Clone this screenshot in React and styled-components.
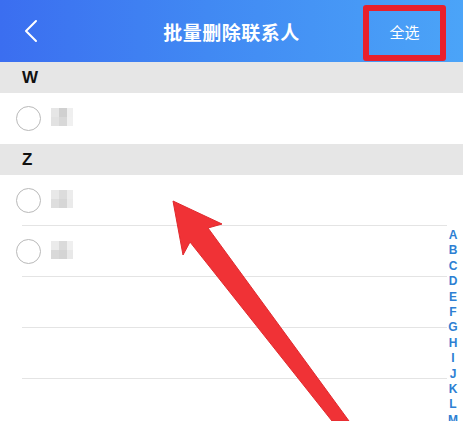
import React from "react";
import styled, { createGlobalStyle } from "styled-components";

const Global = createGlobalStyle`
  html, body { margin: 0; padding: 0; background: #fff; }
  body { font-family: "Noto Sans", "Noto Sans CJK SC", sans-serif; overflow: hidden; }
`;

const Page = styled.div`
  position: relative;
  width: 463px;
  height: 421px;
  overflow: hidden;
  background: #fff;
`;

const Header = styled.header`
  height: 62px;
  display: grid;
  grid-template-columns: 70px 1fr 100px;
  align-items: center;
  background: linear-gradient(90deg, #3b6ef0 0%, #4189f3 45%, #4ba4f8 100%);
  box-sizing: border-box;
`;

const Back = styled.div`
  display: flex;
  align-items: center;
  padding-left: 24px;
`;

const Title = styled.h1`
  margin: 0;
  text-align: center;
  color: #fff;
  font-family: "Noto Sans CJK SC", sans-serif;
  font-size: 19px;
  font-weight: 700;
  letter-spacing: 0.5px;
  padding-left: 30px;
`;

const SelectAll = styled.div`
  justify-self: start;
  margin-top: 4px;
  width: 83px;
  height: 56px;
  box-sizing: border-box;
  border: 6px solid #e8202c;
  border-radius: 3px;
  display: flex;
  align-items: center;
  justify-content: center;
  color: #fff;
  font-family: "Noto Sans CJK SC", sans-serif;
  font-size: 15px;
  padding-bottom: 4px;
`;

const SectionHeader = styled.div`
  height: 31px;
  background: #e6e6e6;
  display: flex;
  align-items: center;
  padding-left: 22px;
  font-family: "Liberation Sans", sans-serif;
  font-weight: 700;
  font-size: 17px;
  color: #111;
`;

const Row = styled.div`
  height: 51px;
  display: flex;
  align-items: center;
  padding-left: 16px;
  gap: 10px;
  position: relative;
  &::after {
    content: "";
    display: ${(p) => (p.$sep ? "block" : "none")};
    position: absolute;
    left: 22px;
    right: 16px;
    bottom: 0;
    height: 1px;
    background: #e4e4e4;
  }
`;

const Radio = styled.span`
  width: 23px;
  height: 23px;
  border-radius: 50%;
  border: 1px solid #b9b9b9;
  flex: none;
`;

const Blur = styled.span`
  display: grid;
  grid-template-columns: 8px 8px 6px;
  grid-template-rows: 9px 9px;
  margin-top: -4px;
  & > i { display: block; }
`;

const Name = ({ shades }) => (
  <Blur>
    {shades.map((c, i) => (
      <i key={i} style={{ background: c }} />
    ))}
  </Blur>
);

const Index = styled.div`
  position: absolute;
  right: 3px;
  top: 228px;
  display: flex;
  flex-direction: column;
  align-items: center;
  width: 14px;
  font-family: "Liberation Sans", sans-serif;
  font-size: 12px;
  font-weight: 700;
  color: #2e7fd3;
  line-height: 15.4px;
`;

const Arrow = styled.svg`
  position: absolute;
  left: 0;
  top: 0;
  pointer-events: none;
`;

const letters = "ABCDEFGHIJKLM".split("");

export default function App() {
  return (
    <Page>
      <Global />
      <Header>
        <Back>
          <svg width="14" height="24" viewBox="0 0 14 24">
            <path d="M12 2 L2 12 L12 22" fill="none" stroke="#fff" strokeWidth="2" strokeLinecap="round" strokeLinejoin="round" />
          </svg>
        </Back>
        <Title>批量删除联系人</Title>
        <SelectAll>全选</SelectAll>
      </Header>
      <SectionHeader>W</SectionHeader>
      <Row>
        <Radio />
        <Name shades={["#e6e6e6", "#d0d0d0", "#efefef", "#e2e2e2", "#d8d8d8", "#f0f0f0"]} />
      </Row>
      <SectionHeader>Z</SectionHeader>
      <Row $sep>
        <Radio />
        <Name shades={["#e8e8e8", "#dcdcdc", "#ececec", "#dedede", "#d6d6d6", "#eaeaea"]} />
      </Row>
      <Row $sep>
        <Radio />
        <Name shades={["#ebebeb", "#dadada", "#efefef", "#d9d9d9", "#d4d4d4", "#e8e8e8"]} />
      </Row>
      <Row $sep />
      <Row $sep />
      <Row $sep />
      <Index>
        {letters.map((l) => (
          <span key={l}>{l}</span>
        ))}
      </Index>
      <Arrow width="463" height="421" viewBox="0 0 463 421">
        <polygon
          points="173,201 222,224 208,228 349,421 332,421 190,242 183,255"
          fill="#f03236"
          stroke="#e02a2e"
          strokeWidth="1"
          strokeLinejoin="round"
        />
      </Arrow>
    </Page>
  );
}
